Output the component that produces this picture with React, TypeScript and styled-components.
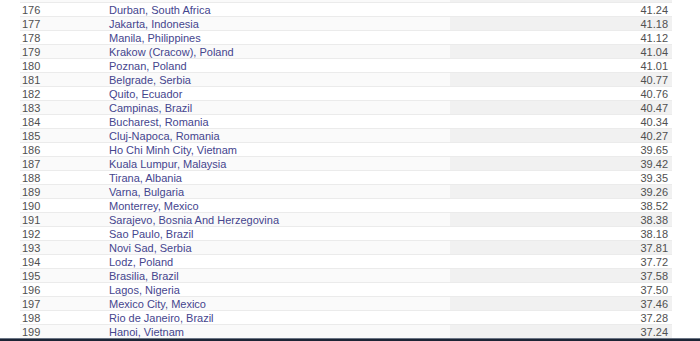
import React from "react";
import styled, { createGlobalStyle } from "styled-components";

const GlobalStyle = createGlobalStyle`
  html, body {
    margin: 0;
    padding: 0;
    background: #ffffff;
    overflow: hidden;
  }
  body {
    font-family: "Liberation Sans", Arial, sans-serif;
  }
`;

const Page = styled.div`
  width: 700px;
  height: 341px;
  display: flex;
  flex-direction: column;
  overflow: hidden;
`;

const TableArea = styled.div`
  flex: 1;
  overflow: hidden;
  padding: 0 28px 0 20px;
`;

// the previous page row is cut by the top edge, as in a scrolled view
const Table = styled.div`
  margin-top: -11px;
  display: flex;
  flex-direction: column;
`;

const Row = styled.div`
  display: grid;
  grid-template-columns: 86px 344px 1fr;
  height: 14px;
  box-sizing: border-box;
  border-bottom: 1px solid #ebebeb;
  font-size: 11px;
  line-height: 15px;
`;

const Cell = styled.div<{ shaded?: boolean; strong?: boolean }>`
  padding: 0 2px;
  white-space: nowrap;
  overflow: hidden;
  color: #505050;
  background: ${({ shaded, strong }) =>
    shaded ? (strong ? "#f1f1f1" : "#fafafa") : "#ffffff"};
`;

const CityLink = styled.a`
  color: #45458e;
  text-decoration: none;
  padding-left: 1px;
`;

const Value = styled(Cell)`
  text-align: right;
  padding-right: 4px;
`;

const Taskbar = styled.div`
  height: 3px;
  box-sizing: border-box;
  flex-shrink: 0;
  background: #1c2535;
  border-top: 1px solid #6b7585;
`;

const rows: [number, string, string][] = [
  [175, "", ""],
  [176, "Durban, South Africa", "41.24"],
  [177, "Jakarta, Indonesia", "41.18"],
  [178, "Manila, Philippines", "41.12"],
  [179, "Krakow (Cracow), Poland", "41.04"],
  [180, "Poznan, Poland", "41.01"],
  [181, "Belgrade, Serbia", "40.77"],
  [182, "Quito, Ecuador", "40.76"],
  [183, "Campinas, Brazil", "40.47"],
  [184, "Bucharest, Romania", "40.34"],
  [185, "Cluj-Napoca, Romania", "40.27"],
  [186, "Ho Chi Minh City, Vietnam", "39.65"],
  [187, "Kuala Lumpur, Malaysia", "39.42"],
  [188, "Tirana, Albania", "39.35"],
  [189, "Varna, Bulgaria", "39.26"],
  [190, "Monterrey, Mexico", "38.52"],
  [191, "Sarajevo, Bosnia And Herzegovina", "38.38"],
  [192, "Sao Paulo, Brazil", "38.18"],
  [193, "Novi Sad, Serbia", "37.81"],
  [194, "Lodz, Poland", "37.72"],
  [195, "Brasilia, Brazil", "37.58"],
  [196, "Lagos, Nigeria", "37.50"],
  [197, "Mexico City, Mexico", "37.46"],
  [198, "Rio de Janeiro, Brazil", "37.28"],
  [199, "Hanoi, Vietnam", "37.24"],
];

export default function App() {
  return (
    <Page>
      <GlobalStyle />
      <TableArea>
        <Table>
          {rows.map(([rank, city, value]) => {
            const shaded = rank % 2 === 1;
            return (
              <Row key={rank}>
                <Cell shaded={shaded}>{city ? rank : ""}</Cell>
                <Cell shaded={shaded}>
                  {city && <CityLink href="#">{city}</CityLink>}
                </Cell>
                <Value shaded={shaded} strong>
                  {value}
                </Value>
              </Row>
            );
          })}
        </Table>
      </TableArea>
      <Taskbar />
    </Page>
  );
}
